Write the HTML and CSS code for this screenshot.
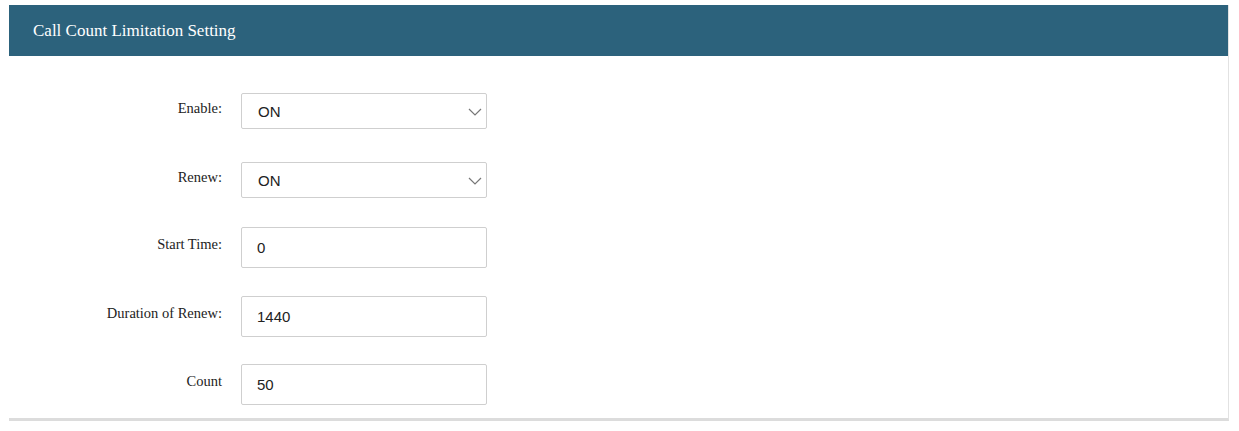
FILE: index.html
```html
<!DOCTYPE html>
<html>
<head>
<meta charset="utf-8">
<link rel="stylesheet" href="styles.css">
</head>
<body>
<div class="panel">
  <div class="panel-head">Call Count Limitation Setting</div>
  <div class="panel-body">
    <div class="row row-select row-first">
      <label class="lbl">Enable:</label>
      <div class="sel-wrap">
        <select class="ctl"><option>ON</option><option>OFF</option></select>
        <svg class="chev" width="14" height="8" viewBox="0 0 14 8"><path d="M1 1 L7 7 L13 1" fill="none" stroke="#777" stroke-width="1.2"/></svg>
      </div>
    </div>
    <div class="row row-select row-second">
      <label class="lbl">Renew:</label>
      <div class="sel-wrap">
        <select class="ctl"><option>ON</option><option>OFF</option></select>
        <svg class="chev" width="14" height="8" viewBox="0 0 14 8"><path d="M1 1 L7 7 L13 1" fill="none" stroke="#777" stroke-width="1.2"/></svg>
      </div>
    </div>
    <div class="row row-input row-third">
      <label class="lbl">Start Time:</label>
      <input class="ctl inp" type="text" value="0">
    </div>
    <div class="row row-input">
      <label class="lbl">Duration of Renew:</label>
      <input class="ctl inp" type="text" value="1440">
    </div>
    <div class="row row-input">
      <label class="lbl">Count</label>
      <input class="ctl inp" type="text" value="50">
    </div>
  </div>
</div>
</body>
</html>
```
FILE: styles.css
```css
html, body {
  margin: 0;
  padding: 0;
  background: #fff;
}
body {
  padding: 5px 0 0 9px;
  font-family: "Liberation Serif", "Times New Roman", serif;
}
.panel {
  width: 1220px;
  background: #fff;
  border-right: 1px solid #e2e2e2;
  border-bottom: 3px solid #dcdcdc;
  box-sizing: border-box;
}
.panel-head {
  height: 51px;
  background: #2c627c;
  color: #fff;
  font-size: 17px;
  line-height: 51px;
  padding-left: 24px;
}
.panel-body {
  display: flex;
  flex-direction: column;
  gap: 27px;
  padding: 37px 0 13px 0;
}
.row {
  display: flex;
  align-items: center;
}
.row-first { margin-bottom: 6px; }
.row-second { margin-bottom: 2px; }
.row-third { margin-bottom: 1px; }
.lbl {
  width: 213px;
  text-align: right;
  font-size: 14.5px;
  color: #222;
  margin-right: 19px;
  margin-bottom: 6px;
}
.sel-wrap {
  position: relative;
  width: 246px;
  height: 36px;
}
.ctl {
  box-sizing: border-box;
  width: 246px;
  border: 1px solid #cfcfcf;
  border-radius: 2px;
  background: #fff;
  font-family: "Liberation Sans", Arial, sans-serif;
  font-size: 15px;
  color: #222;
  padding: 0 0 0 16px;
  outline: none;
}
select.ctl {
  height: 36px;
  appearance: none;
  -webkit-appearance: none;
}
.chev {
  position: absolute;
  right: 5px;
  top: 15px;
  pointer-events: none;
}
.inp {
  height: 41px;
  padding-left: 15px;
}
```
